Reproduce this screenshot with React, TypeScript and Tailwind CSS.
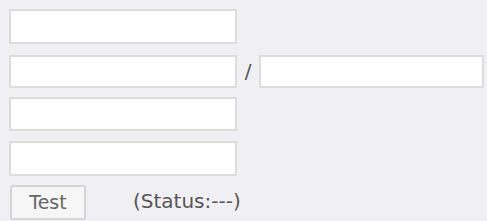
import React from 'react';

const inputCls =
  'h-full w-full bg-white border-2 border-[#dcdcdc] outline-none rounded-[1px]';

const App = () => {
  return (
    <div
      className="w-[487px] h-[221px] bg-[#f0f0f4] pl-[9px] pt-[9px] overflow-hidden"
      style={{ fontFamily: '"DejaVu Sans", Verdana, sans-serif' }}
    >
      <div className="w-[228px] h-[35px]">
        <input className={inputCls} type="text" />
      </div>

      <div className="flex items-center mt-[11px] h-[33px]">
        <div className="w-[228px] h-full">
          <input className={inputCls} type="text" />
        </div>
        <span className="w-[22px] text-center text-[20px] text-[#555] -mt-[2px]">/</span>
        <div className="w-[225px] h-full">
          <input className={inputCls} type="text" />
        </div>
      </div>

      <div className="w-[228px] h-[34px] mt-[9px]">
        <input className={inputCls} type="text" />
      </div>

      <div className="w-[228px] h-[35px] mt-[10px]">
        <input className={inputCls} type="text" />
      </div>

      <div className="flex items-center mt-[9px] h-[35px]">
        <button
          type="button"
          className="ml-[1px] w-[76px] h-full bg-[#f6f6f6] border-2 border-[#d4d4d4] rounded-[3px] text-[19px] text-[#666] leading-none"
        >
          Test
        </button>
        <span className="ml-[47px] text-[20px] text-[#555] leading-none -mt-[4px]">(Status:---)</span>
      </div>
    </div>
  );
};

export default App;
